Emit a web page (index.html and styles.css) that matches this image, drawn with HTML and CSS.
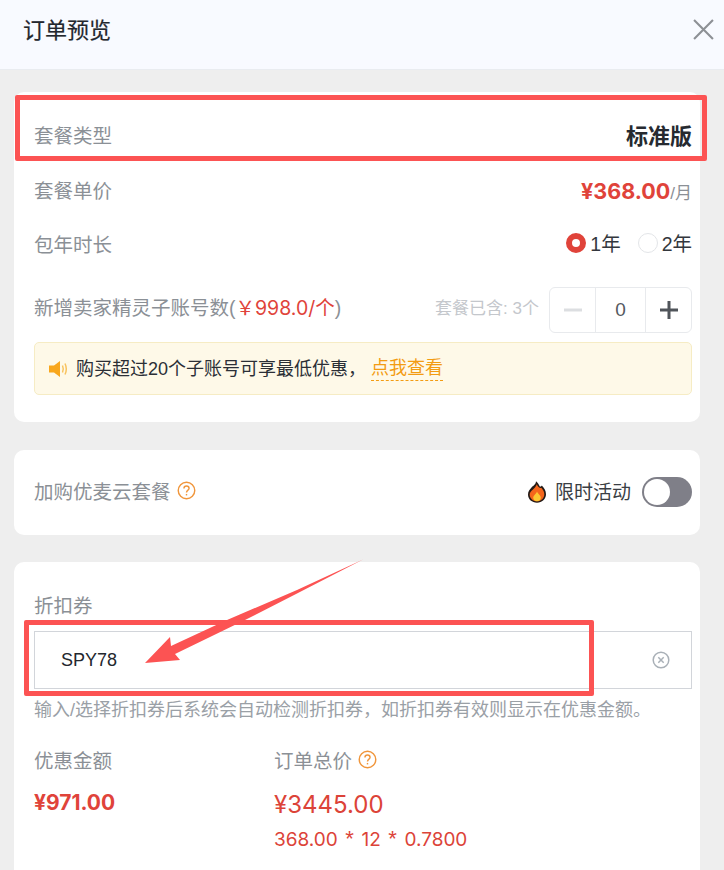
FILE: index.html
```html
<!DOCTYPE html>
<html lang="zh">
<head>
<meta charset="utf-8">
<title>订单预览</title>
<link rel="stylesheet" href="styles.css">
</head>
<body>
<div class="modal">
  <header class="head">
    <h1>订单预览</h1>
    <svg class="close" viewBox="0 0 20 20"><path d="M1 1L19 19M19 1L1 19"/></svg>
  </header>
  <main class="body">
    <section class="card c1">
      <div class="row r-type"><span class="label">套餐类型</span><strong class="plan">标准版</strong></div>
      <div class="row r-price"><span class="label">套餐单价</span><span class="price"><b>¥368.00</b><i>/月</i></span></div>
      <div class="row r-year"><span class="label">包年时长</span>
        <span class="radios">
          <span class="radio"><span class="dot on"></span>1年</span>
          <span class="radio"><span class="dot"></span>2年</span>
        </span>
      </div>
      <div class="row r-acc">
        <span class="label">新增卖家精灵子账号数(<em>￥998.0/个</em>)</span>
        <span class="acc-right">
          <span class="included">套餐已含: 3个</span>
          <span class="stepper">
            <span class="step"><svg viewBox="0 0 18 18"><path class="minus" d="M0 9H18"/></svg></span>
            <span class="num">0</span>
            <span class="step"><svg viewBox="0 0 18 18"><path class="plus" d="M0 9H18M9 0V18"/></svg></span>
          </span>
        </span>
      </div>
      <div class="notice">
        <svg class="horn" viewBox="0 0 20 18"><path class="horn-b" d="M0 5.5H5L11 1V17L5 12.500H0Z"/><path class="horn-w" d="M13.500 5.500Q15 9 13.500 12.500M16 3.500Q18.600 9 16 14.500"/></svg>
        <span class="notice-text">购买超过20个子账号可享最低优惠，</span><a class="notice-link">点我查看</a>
      </div>
    </section>

    <section class="card c2">
      <span class="label with-help">加购优麦云套餐
        <svg class="help" viewBox="0 0 20 20"><circle cx="10" cy="10" r="8.700"/><path d="M7.300 8Q7.300 5.300 10 5.300T12.700 7.800C12.700 9.500 10 9.700 10 12"/><path d="M10 13.600V15.200"/></svg>
      </span>
      <span class="promo">
        <svg class="fire" viewBox="0 0 18 24" preserveAspectRatio="none"><path class="f1" d="M8 .3C10 2 10.800 4 12 6.200C13 6 13.500 5.500 13.800 4.800C16.300 7.500 18 10.500 18 14.500C18 19.800 14 23.700 9 23.700S0 19.800 0 14.700C0 11 1.800 9 3.500 7C5 5.300 7.800 4 8 .3Z"/><path class="f2" d="M8.800 3.500C9.800 6.500 12.500 8.500 13.300 7.300C15.300 9.800 16.300 12 16.300 14.800C16.300 18.800 13.200 22.200 9 22.200S1.700 18.800 1.700 15C1.700 10.500 7.500 8.500 8.800 3.500Z"/><path class="f3" d="M9 11.500C9.600 14 12.800 15.300 12.800 18.300C12.800 20.500 11 22.200 9 22.200S5.200 20.500 5.200 18.300C5.200 15.800 8.200 14.500 9 11.500Z"/></svg>
        <span class="promo-text">限时活动</span>
        <span class="switch"><span class="knob"></span></span>
      </span>
    </section>

    <section class="card c3">
      <div class="label coupon-label">折扣券</div>
      <div class="input"><span class="code">SPY78</span>
        <svg class="clear" viewBox="0 0 18 18"><circle cx="9" cy="9" r="7.800"/><path d="M6.300 6.300L11.700 11.700M11.700 6.300L6.300 11.700"/></svg>
      </div>
      <p class="hint">输入/选择折扣券后系统会自动检测折扣券，如折扣券有效则显示在优惠金额。</p>
      <div class="totals">
        <div class="col-a">
          <div class="label">优惠金额</div>
          <div class="discount">¥971.00</div>
        </div>
        <div class="col-b">
          <div class="label with-help">订单总价
            <svg class="help" viewBox="0 0 20 20"><circle cx="10" cy="10" r="8.700"/><path d="M7.300 8Q7.300 5.300 10 5.300T12.700 7.800C12.700 9.500 10 9.700 10 12"/><path d="M10 13.600V15.200"/></svg>
          </div>
          <div class="total">¥3445.00</div>
          <div class="formula">368.00 <span class="star">*</span> 12 <span class="star">*</span> 0.7800</div>
        </div>
      </div>
    </section>
  </main>
</div>
<div class="mark mark-1"></div>
<div class="mark mark-2"></div>
<svg class="arrow" viewBox="0 0 724 870"><path d="M363 559.500L297 590L227 620L171 646L170 637L145 663L180 660L175 654L245 620L297 593.500Z"/></svg>
</body>
</html>
```
FILE: styles.css
```css
* { box-sizing: border-box; }
html, body { margin: 0; padding: 0; height: 100%; }
body {
  position: relative;
  width: 724px;
  height: 870px;
  overflow: hidden;
  background: #eeeeee;
  font-family: "Liberation Sans", "Noto Sans CJK SC", sans-serif;
  color: #2b2f36;
}
.head {
  height: 70px;
  background: #f8faff;
  border-bottom: 1px solid #e9ecf0;
  display: flex;
  align-items: center;
  justify-content: space-between;
  padding: 0 10px 10px 23px;
}
.head h1 { margin: 0 0 4px; font-size: 22px; font-weight: 400; color: #23272e; -webkit-text-stroke: .2px #23272e; }
.close { width: 21px; height: 21px; fill: none; stroke: #8d9095; stroke-width: 2; }
.body { padding: 22px 24px 0 14px; }
.card { background: #fff; border-radius: 10px; }
.row { display: flex; justify-content: space-between; align-items: center; }
.label { font-size: 19.5px; color: #8b9096; }
.c1 { height: 330px; padding: 0 8px 0 20px; margin-bottom: 28px; }
.r-type { height: 70px; padding-top: 14px; }
.plan { font-size: 22px; color: #262a30; }
.r-price { height: 50px; padding-top: 4px; }
.price { margin-top: 4px; }
.price b { font-family: "Inter", "Noto Sans CJK SC", sans-serif; color: #e0433a; font-size: 21.5px; }
.price i { color: #8b9096; font-size: 17px; font-style: normal; }
.r-year { height: 60px; }
.r-year .label { margin-top: 2px; }
.radios { display: flex; gap: 17px; font-size: 19.5px; color: #33373d; }
.radio { display: flex; align-items: center; gap: 4px; }
.dot { width: 20px; height: 20px; margin-top: 2px; border-radius: 50%; border: 1px solid #e3e5e8; background: #fff; }
.dot.on { border: 6px solid #e0433a; }
.r-acc { height: 68px; padding-top: 8px; }
.r-acc .label { margin-bottom: 8px; }
.r-acc em { font-family: "Inter", "Noto Sans CJK SC", sans-serif; font-style: normal; color: #e0433a; }
.acc-right { display: flex; align-items: center; gap: 10px; }
.included { font-size: 17px; color: #c4c7cc; margin-bottom: 8px; }
.stepper { display: flex; width: 143px; height: 46px; border: 1px solid #e8eaed; border-radius: 6px; }
.step { width: 45px; display: flex; align-items: center; justify-content: center; }
.step svg { width: 18px; height: 18px; fill: none; stroke-width: 3; }
.minus { stroke: #dcdee1; }
.plus { stroke: #50545a; }
.num { flex: 1; border-left: 1px solid #e8eaed; border-right: 1px solid #e8eaed; text-align: center; line-height: 44px; font-size: 19px; color: #55595f; }
.notice {
  height: 53px;
  margin-top: 2px;
  display: flex;
  align-items: center;
  padding-left: 14px;
  background: #fef9e8;
  border: 1px solid #f6ecc4;
  border-radius: 5px;
  font-size: 18px;
  color: #2b2f36;
}
.horn { width: 20px; height: 18px; margin-right: 7px; }
.horn-b { fill: #f8a71d; }
.horn-w { fill: none; stroke: #f8c35e; stroke-width: 1.5; }
.notice-text { margin-bottom: 3px; }
.notice-link { color: #f39c12; border-bottom: 1px dashed #f39c12; line-height: 23px; margin-top: 1px; margin-left: 5px; }
.c2 { height: 85px; padding: 0 8px 0 20px; margin-bottom: 27px; display: flex; align-items: center; justify-content: space-between; }
.c2 .label { margin-bottom: 4px; }
.with-help { display: inline-flex; align-items: center; gap: 6px; }
.help { width: 19px; height: 19px; fill: none; stroke: #f0963c; stroke-width: 1.500; }
.promo { display: flex; align-items: center; margin-bottom: 1px; }
.fire { width: 18px; height: 22px; margin-right: 9px; }
.f1 { fill: #231a16; }
.f2 { fill: #f4661c; }
.f3 { fill: #fcc832; }
.promo-text { font-size: 19px; color: #3a3e44; margin-right: 11px; margin-bottom: 3px; }
.switch { width: 50px; height: 30px; border-radius: 15px; background: #7f7f88; padding: 2px; }
.knob { display: block; width: 26px; height: 26px; border-radius: 50%; background: #fff; }
.c3 { height: 320px; padding: 31px 8px 0 20px; }
.coupon-label { line-height: 26px; margin-bottom: 12px; }
.input {
  height: 58px;
  border: 1px solid #d2d5da;
  display: flex;
  align-items: center;
  justify-content: space-between;
  padding: 0 21px 0 26px;
}
.code { font-size: 18px; color: #23272e; }
.clear { width: 18px; height: 18px; fill: none; stroke: #a9b0b7; stroke-width: 1.500; }
.hint { margin: 9px 0 0; font-size: 18px; line-height: 24px; color: #9aa0a6; }
.totals { display: flex; margin-top: 23px; }
.col-a { width: 240px; }
.discount { margin-top: 16px; font-family: "Inter", sans-serif; font-size: 21px; font-weight: 700; color: #e0433a; }
.total { margin-top: 16px; font-family: "Inter", sans-serif; font-size: 24px; color: #dc4338; }
.formula { margin-top: 9px; font-family: "Inter", sans-serif; font-size: 19px; word-spacing: 2.2px; color: #dc4338; }
.star { font-family: "Liberation Sans", sans-serif; font-size: 22px; line-height: 1; }
.mark { position: absolute; border: 5px solid #fc5353; border-radius: 2px; }
.mark-1 { left: 15px; top: 95px; width: 692px; height: 66px; }
.mark-2 { left: 24px; top: 620px; width: 570px; height: 76px; }
.arrow { position: absolute; left: 0; top: 0; width: 724px; height: 870px; fill: #fc5353; }
```
